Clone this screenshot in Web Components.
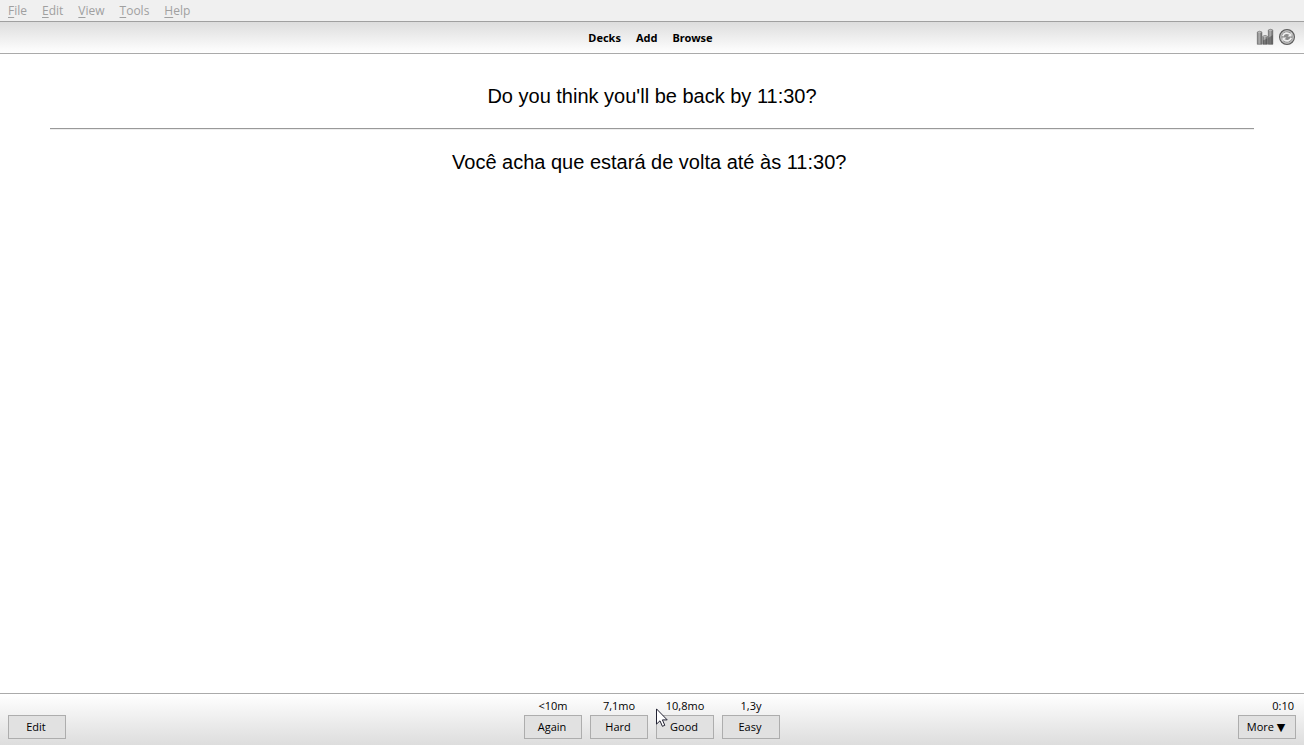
<!DOCTYPE html>
<html lang="en">
<head>
<meta charset="utf-8">
<title>Review</title>
<style>
html, body { height: 100%; margin: 0; }
body { background: #fff; color: #000; }
</style>
</head>
<body>
<review-app></review-app>
<script>
const define = (name, html, setup) => {
  const template = document.createElement('template');
  template.innerHTML = html;
  customElements.define(name, class extends HTMLElement {
    connectedCallback() {
      if (this.shadowRoot) return;
      const root = this.attachShadow({ mode: 'open' });
      root.append(template.content.cloneNode(true));
      if (setup) setup(this, root);
    }
  });
};

define('menu-bar', `
<style>
:host { display: block; background: #f0f0f0; }
nav { display: flex; gap: 15px; height: 21px; padding: 0 8px; align-items: center; }
a { font: 12px/20px "Open Sans", sans-serif; color: #a0a0a0; text-decoration: none; }
u { text-underline-offset: 2px; text-decoration-thickness: 1px; }
</style>
<nav aria-label="Menu">
  <a href="#file"><u>F</u>ile</a><a href="#edit"><u>E</u>dit</a><a href="#view"><u>V</u>iew</a><a href="#tools"><u>T</u>ools</a><a href="#help"><u>H</u>elp</a>
</nav>`);

define('stats-icon', `
<style>:host, svg { display: block; width: 18px; height: 18px; }</style>
<svg viewBox="0 0 18 18" aria-hidden="true">
  <defs><linearGradient id="g"><stop stop-color="#707070"/><stop offset=".4" stop-color="#b4b4b4"/><stop offset="1" stop-color="#606060"/></linearGradient></defs>
  <g stroke="#666" stroke-width=".6" fill="url(#g)">
    <path d="M1.3 4q2.3-1.6 4.6 0v12.3H1.3z"/>
    <path d="M6.8 8.2q2.3-1.6 4.6 0v8.1H6.8z"/>
    <path d="M12.3 2q2.3-1.5 4.5 0v14.3h-4.5z"/>
  </g>
  <path d="M1.8 4.3h3.6M7.3 8.6h3.6M12.8 2.4h3.5" stroke="#c2c2c2" stroke-width=".8"/>
  <path d="M6.9 12.6l4.4-2v5.7H6.9zM12.4 10l4.3-3v9.3h-4.3z" fill="#444" opacity=".5"/>
</svg>`);

define('sync-icon', `
<style>:host, svg { display: block; width: 18px; height: 18px; }</style>
<svg viewBox="0 0 18 18" aria-hidden="true">
  <circle cx="9" cy="9" r="7.4" fill="#8c8c8c" stroke="#5e5e5e" stroke-width="1.2"/>
  <circle cx="9" cy="9" r="6.2" fill="none" stroke="#d0d0d0" stroke-width="1"/>
  <path d="M4.8 8.2C5.6 4.9 9.8 4.2 12 6.4M13.2 9.8C12.4 13.1 8.2 13.8 6 11.6" fill="none" stroke="#eee" stroke-width="1.8"/>
  <path d="M13.6 4.6v4H9.6zM4.4 13.4v-4h4z" fill="#eee"/>
</svg>`);

define('tool-bar', `
<style>
:host { display: block; border: solid #aaa; border-width: 1px 0; background: linear-gradient(#ddd, #fff); border-top-color: #a0a0a0; }
div { display: grid; grid-template-columns: 1fr auto 1fr; align-items: center; height: 31px; padding: 0 8px; }
nav { grid-column: 2; display: flex; gap: 15px; padding-right: 3px; }
a { color: #000; text-decoration: none; font: bold 11px/16px "Noto Sans", sans-serif; }
span { display: flex; justify-content: flex-end; gap: 4px; padding-bottom: 1px; }
span a { display: block; }
</style>
<div>
  <nav aria-label="Main"><a href="#decks">Decks</a><a href="#add">Add</a><a href="#browse">Browse</a></nav>
  <span><a href="#stats" aria-label="Statistics"><stats-icon></stats-icon></a><a href="#sync" aria-label="Sync"><sync-icon></sync-icon></a></span>
</div>`);

define('flash-card', `
<style>
:host { display: block; padding: 30px 50px; font: 20px/24px "Liberation Sans", Arial, sans-serif; text-align: center; }
hr { margin: 20px 0; border: solid; border-width: 1px 0; border-color: #999 transparent #eee; }
</style>
<slot name="front"></slot><hr><slot name="back"></slot>`);

define('answer-button', `
<style>
:host { display: flex; flex-direction: column; width: 58px; font: 11px/16px "Open Sans", "DejaVu Sans", sans-serif; }
label { height: 16px; text-align: center; margin-bottom: 1px; }
:host([align=end]) label { text-align: right; padding-right: 2px; }
button { box-sizing: border-box; height: 24px; width: 100%; margin: 0; padding: 0 2px 0 0; border: 1px solid #adadad; border-radius: 0; background: #e1e1e1; color: #000; font: inherit; white-space: nowrap; }
</style>
<label for="b"></label><button id="b"><slot></slot></button>`, (host, root) => {
  root.querySelector('label').textContent = host.getAttribute('label') || '';
});

define('mouse-pointer', `
<style>:host, svg { display: block; width: 13px; height: 20px; }</style>
<svg viewBox="0 0 13 20" aria-hidden="true"><path d="M.5 .9v15.2l3.5-3.3 2.4 5.5 2.4-1-2.4-5.4h4.8z" fill="#fff" stroke="#223" stroke-width="1"/></svg>`);

define('answer-bar', `
<style>
:host { display: block; border-top: 1px solid #aaa; background: linear-gradient(#fff, #ddd); }
div { display: grid; grid-template-columns: 1fr auto 1fr; padding: 4px 8px 6px; }
section { display: flex; gap: 8px; }
.end { justify-self: end; }
.good { position: relative; }
mouse-pointer { position: absolute; left: 0; top: 10px; pointer-events: none; }
</style>
<div>
  <answer-button>Edit</answer-button>
  <section>
    <answer-button label="&lt;10m">Again</answer-button>
    <answer-button label="7,1mo">Hard</answer-button>
    <span class="good"><answer-button label="10,8mo">Good</answer-button><mouse-pointer></mouse-pointer></span>
    <answer-button label="1,3y">Easy</answer-button>
  </section>
  <answer-button class="end" align="end" label="0:10">More ▼</answer-button>
</div>`);

define('review-app', `
<style>
:host { display: flex; flex-direction: column; min-height: 100vh; }
flash-card { flex: 1; }
</style>
<menu-bar></menu-bar>
<tool-bar></tool-bar>
<flash-card>
  <span slot="front">Do you think you'll be back by 11:30?</span>
  <span slot="back" lang="pt">Você acha que estará de volta até às 11:30?&nbsp;</span>
</flash-card>
<answer-bar></answer-bar>`);
</script>
</body>
</html>
